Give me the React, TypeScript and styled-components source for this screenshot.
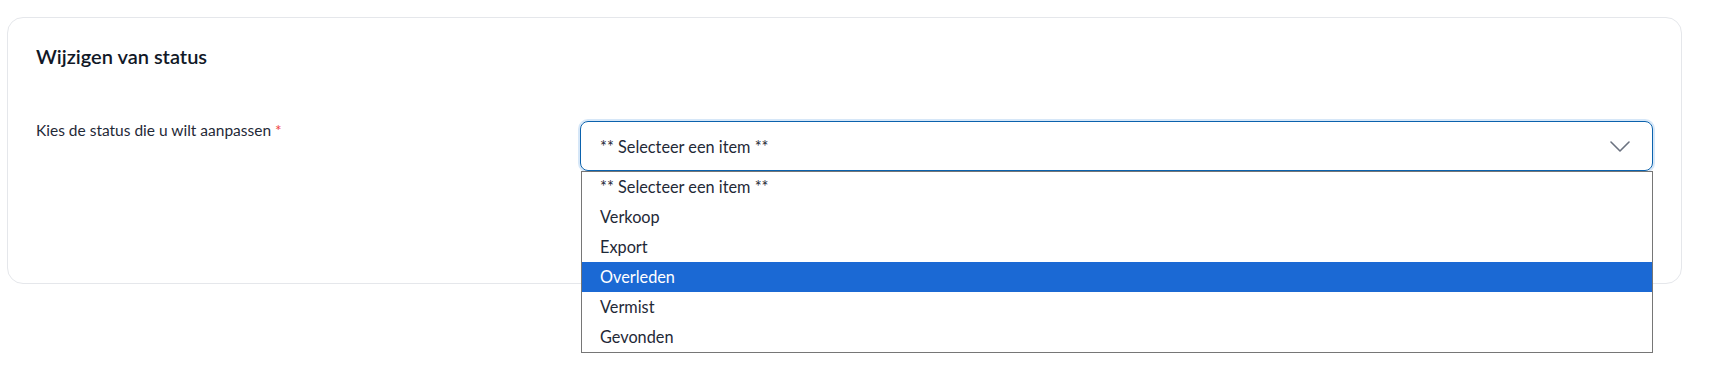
import React from "react";
import styled, { createGlobalStyle } from "styled-components";

const STATUSES = ["** Selecteer een item **", "Verkoop", "Export", "Overleden", "Vermist", "Gevonden"];
const ACTIVE = "Overleden";

const GlobalStyle = createGlobalStyle`
  html, body {
    margin: 0;
    padding: 0;
    background: #ffffff;
    font-family: "Lato", "Noto Sans", sans-serif;
    color: #1f2937;
  }
`;

const Page = styled.main`
  padding: 17px 30px 0 7px;
  min-height: 382px;
  box-sizing: border-box;
`;

const Card = styled.section`
  border: 1px solid #e5e7eb;
  border-radius: 16px;
  padding: 26px 28px 0 28px;
  height: 267px;
  box-sizing: border-box;
`;

const Title = styled.h3`
  margin: 0;
  font-size: 20px;
  font-weight: 600;
  color: #111827;
  line-height: 24px;
`;

const FieldRow = styled.div`
  display: grid;
  grid-template-columns: 544px 1fr;
  margin-top: 53px;
  align-items: start;
`;

const Label = styled.label`
  font-size: 15.5px;
  color: #1f2937;
  line-height: 18px;
  .req {
    color: #ef4444;
  }
`;

const SelectWrap = styled.div`
  position: relative;
`;

const SelectBox = styled.div`
  height: 50px;
  box-sizing: border-box;
  border: 1px solid #0b62ad;
  border-radius: 8px;
  box-shadow: 0 0 0 2px #d6e7f8;
  display: flex;
  align-items: center;
  justify-content: space-between;
  padding: 0 22px 0 19px;
  font-size: 16.3px;
  color: #1f2937;
`;

const Menu = styled.ul`
  position: absolute;
  top: 50px;
  left: 1px;
  right: 0;
  margin: 0;
  padding: 0;
  list-style: none;
  background: #ffffff;
  border: 1px solid #767676;
  z-index: 2;
`;

const Option = styled.li<{ $active?: boolean }>`
  height: 30px;
  line-height: 30px;
  padding-left: 18px;
  font-size: 16.3px;
  background: ${(p) => (p.$active ? "#1b69d4" : "#ffffff")};
  color: ${(p) => (p.$active ? "#ffffff" : "#1f2937")};
`;

const Chevron = () => (
  <svg width="20" height="11" viewBox="0 0 20 11" fill="none">
    <path d="M1 1l9 9 9-9" stroke="#6b7280" strokeWidth="1.6" strokeLinecap="round" strokeLinejoin="round" />
  </svg>
);

export default function App() {
  return (
    <>
      <GlobalStyle />
      <Page>
        <Card>
          <Title>Wijzigen van status</Title>
          <FieldRow>
            <Label>
              Kies de status die u wilt aanpassen <span className="req">*</span>
            </Label>
            <SelectWrap>
              <SelectBox>
                <span>{STATUSES[0]}</span>
                <Chevron />
              </SelectBox>
              <Menu>
                {STATUSES.map((s) => (
                  <Option key={s} $active={s === ACTIVE}>
                    {s}
                  </Option>
                ))}
              </Menu>
            </SelectWrap>
          </FieldRow>
        </Card>
      </Page>
    </>
  );
}
